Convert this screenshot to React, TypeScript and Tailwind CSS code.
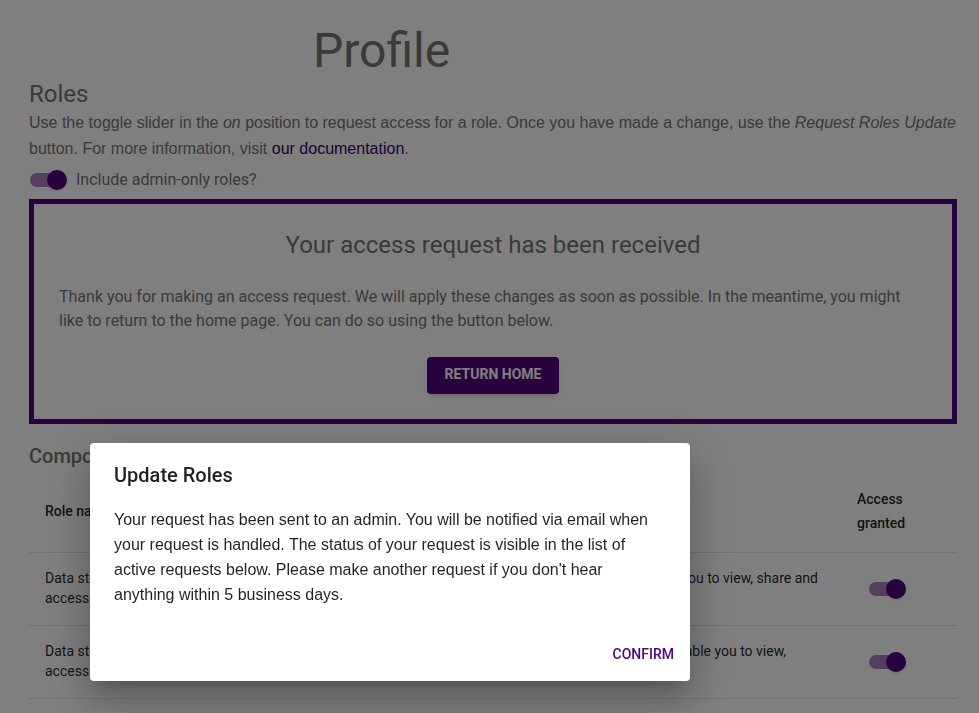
import { useState } from "react";

const rows = [
  {
    name: "Data steward access",
    description:
      "Use this role to manage shared data. This will enable you to view, share and manage access to the data of your team.",
  },
  {
    name: "Data steward access",
    description:
      "Use this role to manage old archived data. This will enable you to view, download and restore the archives.",
  },
];

function Switch({ id, label }: { id: string; label?: string }) {
  const [on, setOn] = useState(true);
  return (
    <input
      id={id}
      type="checkbox"
      role="switch"
      aria-label={label}
      checked={on}
      onChange={(e) => setOn(e.target.checked)}
      className="relative m-3 block h-3.5 w-[34px] shrink-0 cursor-pointer appearance-none rounded-full bg-black/40 before:absolute before:-top-[3px] before:-left-[3px] before:size-5 before:rounded-full before:bg-white before:shadow-sm checked:bg-[#51047c]/50 checked:before:left-[17px] checked:before:bg-[#51047c]"
    />
  );
}

export default function App() {
  const [open, setOpen] = useState(true);
  return (
    <div className="bg-white font-['Roboto',sans-serif] text-[#757575]">
      <main className="pt-[23px] pr-[22px] pl-[29px]">
        <h1 className="w-[76%] text-center text-5xl leading-[55px]">Profile</h1>
        <h2 className="text-2xl leading-8">Roles</h2>
        <p className="font-['Liberation_Sans',Arial,sans-serif] text-base leading-[26px]">
          Use the toggle slider in the <em>on</em> position to request access for a role. Once you have made a
          change, use the <em>Request Roles Update</em> button. For more information, visit{" "}
          <a href="#documentation" className="text-[#40006a]">
            our documentation
          </a>
          .
        </p>
        <div className="mb-px -ml-[11px] flex h-9 items-center">
          <Switch id="admin-roles" />
          <label htmlFor="admin-roles" className="text-base leading-6">
            Include admin-only roles?
          </label>
        </div>

        <section className="flex flex-col gap-6 border-5 border-[#51047c] p-[25px]">
          <h2 className="text-center text-2xl leading-8">Your access request has been received</h2>
          <p className="text-base leading-6">
            Thank you for making an access request. We will apply these changes as soon as possible. In the
            meantime, you might like to return to the home page. You can do so using the button below.
          </p>
          <button
            type="button"
            className="self-center rounded bg-[#51047c] px-[18px] pt-[5px] pb-2 text-sm leading-6 font-bold text-white uppercase shadow-md"
          >
            Return home
          </button>
        </section>

        <h3 className="mt-4 text-xl leading-8 font-medium">Component roles</h3>
        <table className="w-full table-fixed text-left text-sm text-black/87">
          <colgroup>
            <col className="w-[33%]" />
            <col />
            <col className="w-[116px]" />
          </colgroup>
          <thead>
            <tr className="border-b border-[#e0e0e0]">
              <th className="px-4 pt-[15px] pb-[17px] leading-6 font-medium">Role name</th>
              <th className="px-4 pt-[15px] pb-[17px] leading-6 font-medium">Description</th>
              <th className="px-4 pt-[15px] pb-[17px] leading-6 font-medium">
                Access
                <br />
                granted
              </th>
            </tr>
          </thead>
          <tbody>
            {rows.map((row, i) => (
              <tr key={i} className="border-b border-[#e0e0e0]">
                <td className="px-4 pt-[15px] pb-[17px] leading-5">
                  <span className="block max-w-24">{row.name}</span>
                </td>
                <td className="px-4 pt-[15px] pb-[17px] leading-5">{row.description}</td>
                <td className="px-4">
                  <Switch id={`access-${i}`} label={`Access granted: ${row.name}`} />
                </td>
              </tr>
            ))}
          </tbody>
        </table>
      </main>

      {open && (
        <div className="fixed inset-0 bg-black/50">
          <div
            role="dialog"
            aria-modal="true"
            aria-labelledby="dialog-title"
            className="absolute top-[443px] left-[90px] w-[600px] rounded bg-white text-black/87 shadow-[0_11px_15px_-7px_rgba(0,0,0,0.2),0_24px_38px_3px_rgba(0,0,0,0.14),0_9px_46px_8px_rgba(0,0,0,0.12)]"
          >
            <h2 id="dialog-title" className="px-6 py-4 text-xl leading-8 font-medium">
              Update Roles
            </h2>
            <p className="px-6 pb-[22px] font-['Liberation_Sans',Arial,sans-serif] text-base leading-[25px]">
              Your request has been sent to an admin. You will be notified via email when your request is
              handled. The status of your request is visible in the list of active requests below. Please make
              another request if you don't hear anything within 5 business days.
            </p>
            <div className="flex justify-end p-2">
              <button
                type="button"
                onClick={() => setOpen(false)}
                className="rounded px-2 pt-[5px] pb-[7px] text-sm leading-6 font-medium text-[#51047c] uppercase"
              >
                Confirm
              </button>
            </div>
          </div>
        </div>
      )}
    </div>
  );
}
